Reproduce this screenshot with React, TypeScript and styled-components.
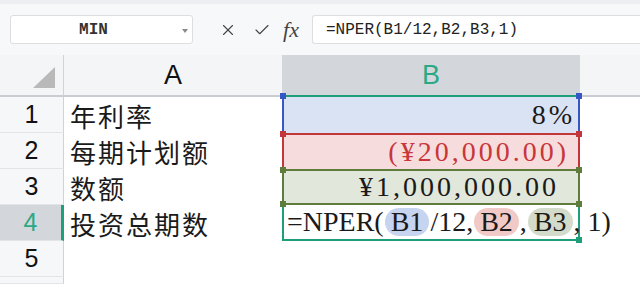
import React from "react";
import styled, { createGlobalStyle } from "styled-components";
import { X, Check } from "lucide-react";

const GlobalStyle = createGlobalStyle`
  html, body {
    margin: 0;
    padding: 0;
    background: #ffffff;
  }
  body {
    width: 640px;
    height: 284px;
    overflow: hidden;
    font-family: "Liberation Sans", "Noto Sans CJK SC", sans-serif;
  }
`;

const TEAL = "#1f9f79";

const tones = {
  blue: { line: "#3658c4", bg: "#dae3f3", pill: "#c6d4f0" },
  red: { line: "#c3373c", bg: "#f6dcdc", pill: "#f1c9c7" },
  green: { line: "#5e7d3d", bg: "#e1e7db", pill: "#d3dccb" },
  teal: { line: TEAL, bg: "#ffffff", pill: "transparent" },
};

type Tone = keyof typeof tones;

const Toolbar = styled.div`
  height: 55px;
  box-sizing: border-box;
  background: #f7f8fa;
  border-top: 4px solid #eceef1;
  display: flex;
  align-items: center;
  padding-left: 10px;
`;

const NameBox = styled.div`
  width: 183px;
  height: 29px;
  box-sizing: border-box;
  background: #fff;
  border: 1px solid #dcdee2;
  border-radius: 3px;
  display: flex;
  align-items: center;
  justify-content: center;
  padding-right: 16px;
  position: relative;
  font-family: "Liberation Mono", monospace;
  font-size: 16px;
  font-weight: 700;
  color: #333;
`;

const Caret = styled.svg`
  position: absolute;
  right: 4px;
  top: 13px;
`;

const ToolIcon = styled.div<{ $w: number }>`
  width: ${(p) => p.$w}px;
  display: flex;
  align-items: center;
  justify-content: center;
  color: #444;
`;

const Fx = styled.span`
  font-family: "Liberation Serif", serif;
  font-style: italic;
  font-size: 22px;
  color: #444;
`;

const FormulaBox = styled.div`
  flex: 1;
  height: 29px;
  margin-left: 8px;
  box-sizing: border-box;
  background: #fff;
  border: 1px solid #dcdee2;
  border-right: none;
  border-radius: 3px 0 0 3px;
  display: flex;
  align-items: center;
  padding-left: 13px;
  font-family: "Liberation Mono", monospace;
  font-size: 16px;
  color: #222;
`;

const Sheet = styled.div`
  display: grid;
  grid-template-columns: 64px 218px 298px 1fr;
  grid-template-rows: 42px repeat(5, 36px) 7px;
  height: 229px;
  overflow: hidden;
`;

const Corner = styled.div`
  background: #f4f5f7;
  border-right: 1px solid #cfd2d6;
  border-bottom: 2px solid #c9ccd0;
  box-sizing: border-box;
  display: flex;
  justify-content: flex-end;
  align-items: flex-end;
  padding: 0 8px 7px 0;
`;

const Triangle = styled.div`
  width: 22px;
  height: 21px;
  background: #b9b9b9;
  clip-path: polygon(100% 0, 100% 100%, 0 100%);
`;

const ColHead = styled.div<{ $active?: boolean }>`
  background: ${(p) => (p.$active ? "#d3d6db" : "#f4f5f7")};
  border-bottom: 2px solid ${(p) => (p.$active ? TEAL : "#c9ccd0")};
  box-sizing: border-box;
  display: flex;
  align-items: center;
  justify-content: center;
  font-size: 27px;
  color: ${(p) => (p.$active ? "#2aa983" : "#111")};
`;

const RowHead = styled.div<{ $active?: boolean }>`
  background: ${(p) => (p.$active ? "#d3d6db" : "#f6f7f8")};
  border-right: ${(p) => (p.$active ? `3px solid ${TEAL}` : "1px solid #cfd2d6")};
  border-bottom: 1px solid #e2e4e7;
  box-sizing: border-box;
  display: flex;
  align-items: center;
  justify-content: center;
  font-size: 25px;
  color: ${(p) => (p.$active ? "#2aa983" : "#111")};
`;

const LabelCell = styled.div`
  display: flex;
  align-items: center;
  padding-left: 6px;
  font-family: "Noto Sans CJK SC", sans-serif;
  font-size: 26px;
  letter-spacing: 2px;
  color: #1a1a1a;
  white-space: nowrap;
`;

const RangeCell = styled.div<{
  $tone: Tone;
  $top?: boolean;
  $bottom?: boolean;
  $pr?: number;
  $color?: string;
}>`
  position: relative;
  box-sizing: border-box;
  background: ${(p) => tones[p.$tone].bg};
  border-left: 2px solid ${(p) => tones[p.$tone].line};
  border-right: 2px solid ${(p) => tones[p.$tone].line};
  border-top: ${(p) => (p.$top ? `2px solid ${tones[p.$tone].line}` : "none")};
  border-bottom: ${(p) => (p.$bottom ? `2px solid ${tones[p.$tone].line}` : "none")};
  display: flex;
  align-items: center;
  justify-content: flex-end;
  padding-right: ${(p) => p.$pr ?? 4}px;
  font-family: "Liberation Serif", "Noto Sans CJK SC", serif;
  font-size: 28px;
  letter-spacing: 3px;
  color: ${(p) => p.$color ?? "#1a1a1a"};
  white-space: nowrap;
`;

const FormulaCell = styled.div`
  position: relative;
  box-sizing: border-box;
  background: #fff;
  border: 2px solid ${TEAL};
  border-top: none;
  display: flex;
  align-items: center;
  padding-left: 3px;
  font-family: "Liberation Serif", serif;
  font-size: 28px;
  color: #1a1a1a;
  white-space: nowrap;
  overflow: visible;
  z-index: 1;
`;

const Pill = styled.span<{ $tone: Tone }>`
  display: inline-block;
  background: ${(p) => tones[p.$tone].pill};
  border-radius: 14px;
  padding: 0 6px;
  line-height: 28px;
  margin: 0 1px;
`;

const Handle = styled.span<{ $tone: Tone; $pos: "tl" | "tr" | "bl" | "br" }>`
  position: absolute;
  z-index: 3;
  width: 6px;
  height: 6px;
  background: ${(p) => tones[p.$tone].line};
  ${(p) => (p.$pos[0] === "t" ? "top: -4px;" : "bottom: -4px;")}
  ${(p) => (p.$pos[1] === "l" ? "left: -4px;" : "right: -4px;")}
`;

const Blank = styled.div``;

const HeadBlank = styled.div`
  background: #f4f5f7;
  border-bottom: 2px solid #c9ccd0;
`;

const corners = ["tl", "tr", "bl", "br"] as const;

const App: React.FC = () => {
  return (
    <>
      <GlobalStyle />
      <Toolbar>
        <NameBox>
          MIN
          <Caret width="6" height="4" viewBox="0 0 6 4">
            <path d="M0 0 L6 0 L3 4 Z" fill="#8a8a8a" />
          </Caret>
        </NameBox>
        <ToolIcon $w={36} style={{ marginLeft: 17 }}>
          <X size={18} strokeWidth={1.5} />
        </ToolIcon>
        <ToolIcon $w={32}>
          <Check size={18} strokeWidth={1.5} />
        </ToolIcon>
        <ToolIcon $w={26}>
          <Fx>fx</Fx>
        </ToolIcon>
        <FormulaBox>=NPER(B1/12,B2,B3,1)</FormulaBox>
      </Toolbar>

      <Sheet>
        <Corner>
          <Triangle />
        </Corner>
        <ColHead>A</ColHead>
        <ColHead $active>B</ColHead>
        <HeadBlank />

        <RowHead>1</RowHead>
        <LabelCell>年利率</LabelCell>
        <RangeCell $tone="blue" $pr={3}>
          {corners.slice(0, 2).map((c) => (
            <Handle key={c} $tone="blue" $pos={c} />
          ))}
          8%
        </RangeCell>
        <Blank />

        <RowHead>2</RowHead>
        <LabelCell>每期计划额</LabelCell>
        <RangeCell $tone="red" $top $pr={9} $color="#c8363a">
          {corners.slice(0, 2).map((c) => (
            <Handle key={c} $tone="red" $pos={c} />
          ))}
          (¥20,000.00)
        </RangeCell>
        <Blank />

        <RowHead>3</RowHead>
        <LabelCell>数额</LabelCell>
        <RangeCell $tone="green" $top $bottom $pr={19}>
          {corners.map((c) => (
            <Handle key={c} $tone="green" $pos={c} />
          ))}
          ¥1,000,000.00
        </RangeCell>
        <Blank />

        <RowHead $active>4</RowHead>
        <LabelCell>投资总期数</LabelCell>
        <FormulaCell>
          <Handle $tone="teal" $pos="br" />
          =NPER(<Pill $tone="blue">B1</Pill>/12,{" "}
          <Pill $tone="red">B2</Pill>, <Pill $tone="green">B3</Pill>, 1)
        </FormulaCell>
        <Blank />

        <RowHead>5</RowHead>
        <LabelCell />
        <Blank />
        <Blank />

        <RowHead />
        <LabelCell />
        <Blank />
        <Blank />
      </Sheet>
    </>
  );
};

export default App;
